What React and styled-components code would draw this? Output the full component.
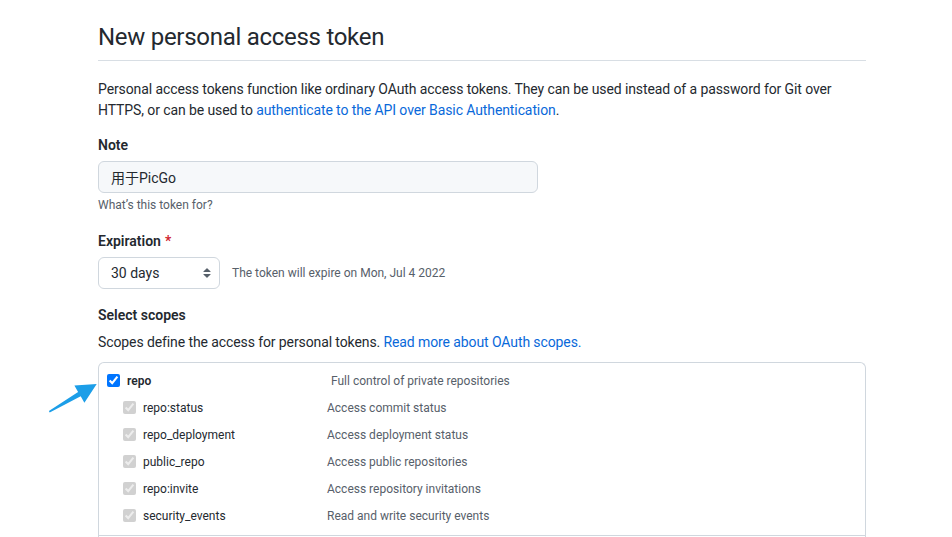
import React from "react";
import styled, { createGlobalStyle } from "styled-components";

const GlobalStyle = createGlobalStyle`
  html, body { margin: 0; padding: 0; background: #ffffff; }
  body {
    font-family: "Segoe UI", Roboto, "Noto Sans CJK SC", sans-serif;
    color: #24292f;
  }
  * { box-sizing: border-box; }
`;

const Page = styled.main`
  width: 768px;
  margin-left: 98px;
  padding-top: 19px;
`;

const Subhead = styled.div`
  border-bottom: 1px solid #d8dee4;
  padding-bottom: 5px;
  margin-bottom: 18px;
`;

const Heading = styled.h2`
  margin: 0;
  font-size: 24px;
  font-weight: 400;
  line-height: 36px;
  letter-spacing: -0.28px;
  color: #24292f;
`;

const Lead = styled.p`
  margin: 0 0 ${(p) => p.$mb || 0}px;
  font-size: 14px;
  line-height: 21px;
  letter-spacing: -0.1px;
  color: #24292f;
`;

const Link = styled.a`
  color: #0969da;
  text-decoration: none;
`;

const Field = styled.div`
  margin-bottom: ${(p) => p.$mb || 0}px;
`;

const Label = styled.label`
  display: block;
  font-size: 14px;
  font-weight: 600;
  line-height: 21px;
  margin-bottom: ${(p) => (p.$mb === undefined ? 5 : p.$mb)}px;
  color: #24292f;
`;

const Required = styled.span`
  color: #cf222e;
  margin-left: 4px;
`;

const TextInput = styled.input`
  display: block;
  width: 440px;
  height: 32px;
  padding: 5px 12px;
  font-family: inherit;
  font-size: 14px;
  line-height: 20px;
  color: #24292f;
  background: #f6f8fa;
  border: 1px solid #d0d7de;
  border-radius: 6px;
  outline: none;
`;

const Note = styled.p`
  margin: 3px 0 0;
  font-size: 12px;
  line-height: 18px;
  color: #57606a;
`;

const InlineRow = styled.div`
  display: flex;
  align-items: center;
  gap: 12px;
`;

const Select = styled.div`
  position: relative;
  display: flex;
  align-items: center;
  width: 122px;
  height: 32px;
  padding: 0 24px 0 12px;
  font-size: 14px;
  color: #24292f;
  background: #ffffff;
  border: 1px solid #d0d7de;
  border-radius: 6px;
`;

const SelectIcon = styled.svg`
  position: absolute;
  right: 4px;
  top: 50%;
  margin-top: -8px;
  width: 16px;
  height: 16px;
`;

const InlineNote = styled.span`
  font-size: 12px;
  line-height: 18px;
  color: #57606a;
`;

const ScopeWrap = styled.div`
  position: relative;
`;

const ScopeBox = styled.div`
  border: 1px solid #d0d7de;
  border-bottom: none;
  border-radius: 6px 6px 0 0;
  height: 176px;
`;

const ScopeGroup = styled.div`
  padding: 4px 0 6px;
  border-bottom: 1px solid #d0d7de;
`;

const ScopeRow = styled.label`
  display: grid;
  grid-template-columns: 20px ${(p) => p.$labelWidth}px 1fr;
  align-items: center;
  height: 27px;
  padding-left: ${(p) => (p.$child ? 24 : 8)}px;
  font-size: 12px;
`;

const Check = styled.input`
  margin: 0;
  width: 13px;
  height: 13px;
`;

const ScopeName = styled.span`
  font-weight: ${(p) => (p.$parent ? 600 : 400)};
  color: #24292f;
`;

const ScopeDesc = styled.span`
  color: #57606a;
`;

const Arrow = styled.svg`
  position: absolute;
  left: -58px;
  top: 8px;
  width: 70px;
  height: 50px;
  pointer-events: none;
`;

const subScopes = [
  ["repo:status", "Access commit status"],
  ["repo_deployment", "Access deployment status"],
  ["public_repo", "Access public repositories"],
  ["repo:invite", "Access repository invitations"],
  ["security_events", "Read and write security events"],
];

export default function App() {
  return (
    <>
      <GlobalStyle />
      <Page>
        <Subhead>
          <Heading>New personal access token</Heading>
        </Subhead>
        <Lead $mb={14}>
          Personal access tokens function like ordinary OAuth access tokens. They can be used
          instead of a password for Git over HTTPS, or can be used to{" "}
          <Link href="#">authenticate to the API over Basic Authentication</Link>.
        </Lead>

        <Field $mb={17}>
          <Label>Note</Label>
          <TextInput defaultValue="用于PicGo" />
          <Note>What’s this token for?</Note>
        </Field>

        <Field $mb={16}>
          <Label>
            Expiration<Required>*</Required>
          </Label>
          <InlineRow>
            <Select>
              30 days
              <SelectIcon viewBox="0 0 16 16">
                <path
                  d="M4.427 9.427l3.396 3.396a.25.25 0 00.354 0l3.396-3.396A.25.25 0 0011.396 9H4.604a.25.25 0 00-.177.427zM4.427 6.573l3.396-3.396a.25.25 0 01.354 0l3.396 3.396A.25.25 0 0111.396 7H4.604a.25.25 0 01-.177-.427z"
                  fill="#57606a"
                />
              </SelectIcon>
            </Select>
            <InlineNote>The token will expire on Mon, Jul 4 2022</InlineNote>
          </InlineRow>
        </Field>

        <Label $mb={6}>Select scopes</Label>
        <Lead $mb={9}>
          Scopes define the access for personal tokens.{" "}
          <Link href="#">Read more about OAuth scopes.</Link>
        </Lead>

        <ScopeWrap>
          <ScopeBox>
            <ScopeGroup>
              <ScopeRow $labelWidth={204}>
                <Check type="checkbox" defaultChecked />
                <ScopeName $parent>repo</ScopeName>
                <ScopeDesc>Full control of private repositories</ScopeDesc>
              </ScopeRow>
              {subScopes.map(([name, desc]) => (
                <ScopeRow key={name} $child $labelWidth={184}>
                  <Check type="checkbox" defaultChecked disabled />
                  <ScopeName>{name}</ScopeName>
                  <ScopeDesc>{desc}</ScopeDesc>
                </ScopeRow>
              ))}
            </ScopeGroup>
          </ScopeBox>
          <Arrow viewBox="0 0 70 50">
            <polygon
              points="8.9,41 38.1,21.9 34.4,15.5 56.7,14 44.4,32.7 40.7,26.3 9.7,42.4"
              fill="#1c9ee8"
            />
          </Arrow>
        </ScopeWrap>
      </Page>
    </>
  );
}
